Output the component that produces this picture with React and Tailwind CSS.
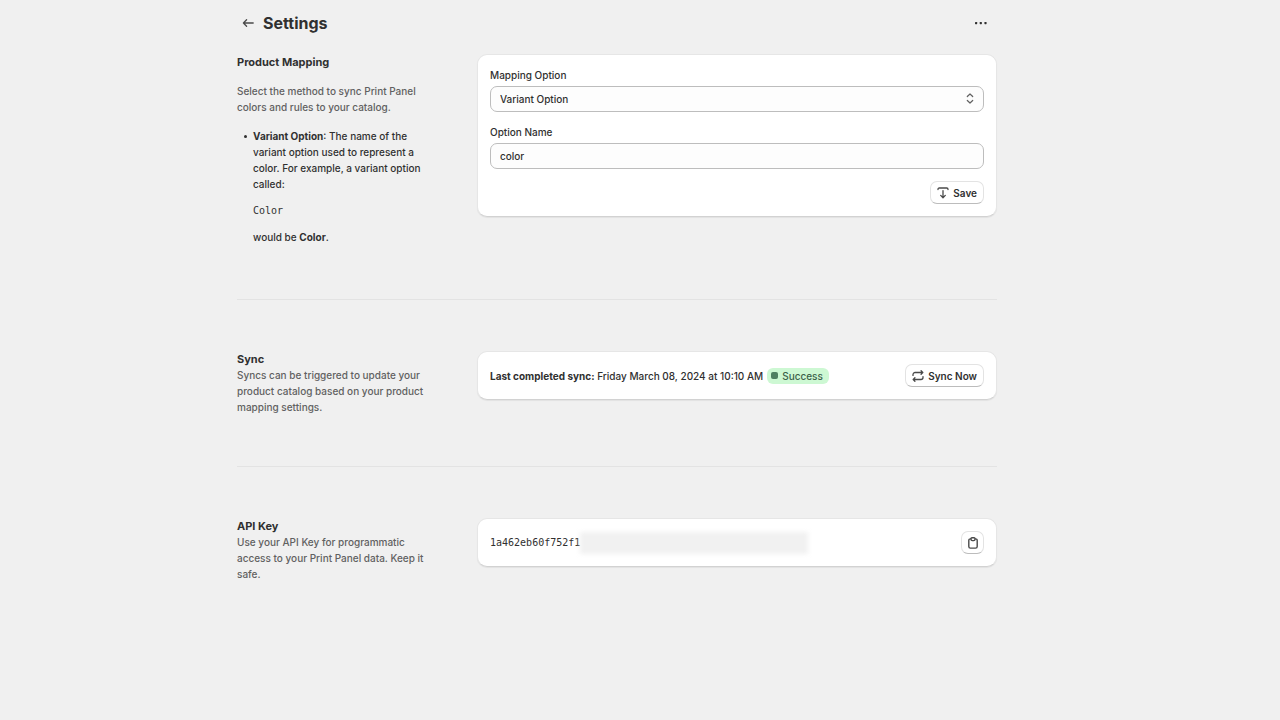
import { useState } from 'react';

const cardClass = 'bg-white rounded-[10px] border border-[#e6e6e6] border-b-[#d2d2d2] shadow-[0_1px_1px_rgba(0,0,0,0.06)]';
const buttonClass = 'flex items-center justify-center h-[23px] bg-white rounded-[7px] border border-[#e3e3e3] border-b-[#bcbcbc] text-[10px] text-[#303030] font-semibold hover:bg-gray-50';
const fieldClass = 'block w-full h-[26px] px-[9px] appearance-none bg-[#fdfdfd] border border-[#bdbdbd] rounded-[7px]';

function ArrowLeftIcon() {
  return (
    <svg width="12" height="10" viewBox="0 0 12 10" fill="none" stroke="#4a4a4a" strokeWidth="1.3" strokeLinecap="round" strokeLinejoin="round">
      <path d="M11.2 5H1.4M4.6 1.8 1.4 5l3.2 3.2" />
    </svg>
  );
}

function DotsIcon() {
  return (
    <svg width="12" height="4" viewBox="0 0 12 4" fill="#303030">
      <rect x="0" y="1" width="2.2" height="2.2" rx="0.6" />
      <rect x="4.7" y="1" width="2.2" height="2.2" rx="0.6" />
      <rect x="9.4" y="1" width="2.2" height="2.2" rx="0.6" />
    </svg>
  );
}

function SelectIcon() {
  return (
    <svg className="absolute right-2.5 top-[7px] pointer-events-none" width="8" height="11" viewBox="0 0 8 11" fill="none" stroke="#616161" strokeWidth="1.2" strokeLinecap="round" strokeLinejoin="round">
      <path d="M1.3 3.5 4 1l2.7 2.5M1.3 7.5 4 10l2.7-2.5" />
    </svg>
  );
}

function SaveIcon() {
  return (
    <svg width="12" height="12" viewBox="0 0 12 12" fill="none" stroke="#4a4a4a" strokeWidth="1.3" strokeLinecap="round" strokeLinejoin="round">
      <path d="M1 2.6v-.3C1 1.6 1.5 1 2.3 1h7.4c.8 0 1.3.6 1.3 1.3v.3M6 3.6v7M3.7 8.4 6 10.7l2.3-2.3" />
    </svg>
  );
}

function SyncIcon() {
  return (
    <svg width="12" height="12" viewBox="0 0 12 12" fill="none" stroke="#4a4a4a" strokeWidth="1.3" strokeLinecap="round" strokeLinejoin="round">
      <path d="M1 5.4V4.6c0-1.2.9-2.1 2.1-2.1h7.6M9.1.8l1.7 1.7-1.7 1.7" />
      <path d="M11 6.6v.8c0 1.2-.9 2.1-2.1 2.1H1.3M2.9 7.8 1.2 9.5l1.7 1.7" />
    </svg>
  );
}

function ClipboardIcon() {
  return (
    <svg width="12" height="12" viewBox="0 0 12 12" fill="none" stroke="#4a4a4a" strokeWidth="1.4" strokeLinejoin="round">
      <path d="M4 1.9h-.6c-.9 0-1.6.7-1.6 1.6v6c0 .9.7 1.6 1.6 1.6h5.2c.9 0 1.6-.7 1.6-1.6v-6c0-.9-.7-1.6-1.6-1.6H8" />
      <path d="M4.9.8h2.2c.5 0 .9.4.9.9v.6c0 .7-.6 1.3-1.3 1.3H5.3C4.6 3.6 4 3 4 2.3v-.6c0-.5.4-.9.9-.9Z" />
    </svg>
  );
}

function Section({ description, children }) {
  return (
    <section className="grid grid-cols-[6fr_13fr] items-start">
      <div className="pr-12">{description}</div>
      {children}
    </section>
  );
}

export default function App() {
  const [method, setMethod] = useState('variant');
  const [optionName, setOptionName] = useState('color');

  return (
    <div className="min-h-screen bg-[#f0f0f0] text-[#303030] text-[10px] leading-4 font-medium font-['Inter',sans-serif] pl-4 pr-[62px]">
      <main className="max-w-[760px] mx-auto">
        <header className="flex items-center justify-between h-[54px] pb-2 pl-[5px] pr-2.5">
          <div className="flex items-center gap-[9px]">
            <a href="#back" aria-label="Back"><ArrowLeftIcon /></a>
            <h1 className="text-base font-bold">Settings</h1>
          </div>
          <button type="button" aria-label="More actions"><DotsIcon /></button>
        </header>

        <Section
          description={
            <>
              <h2 className="text-[11px] leading-4 font-bold">Product Mapping</h2>
              <p className="mt-[13px] text-[#616161]">Select the method to sync Print Panel colors and rules to your catalog.</p>
              <ul className="mt-[13px] pl-[7px]">
                <li className="flex gap-1.5">
                  <span className="shrink-0 w-[3px] h-[3px] mt-[7px] rounded-full bg-[#303030]"></span>
                  <div>
                    <p><b>Variant Option</b>: The name of the variant option used to represent a color. For example, a variant option called:</p>
                    <pre className="mt-[11px] mb-2.5 font-normal font-['DejaVu_Sans_Mono',monospace]">Color</pre>
                    <p>would be <b>Color</b>.</p>
                  </div>
                </li>
              </ul>
            </>
          }
        >
          <form className={`${cardClass} p-3`} onSubmit={(e) => e.preventDefault()}>
            <label htmlFor="method" className="block mb-[3px]">Mapping Option</label>
            <div className="relative">
              <select id="method" value={method} onChange={(e) => setMethod(e.target.value)} className={fieldClass}>
                <option value="variant">Variant Option</option>
                <option value="tag">Product Tag</option>
              </select>
              <SelectIcon />
            </div>
            <label htmlFor="optionName" className="block mt-3 mb-[3px]">Option Name</label>
            <input id="optionName" type="text" value={optionName} onChange={(e) => setOptionName(e.target.value)} className={fieldClass} />
            <div className="flex justify-end mt-3">
              <button type="submit" className={`${buttonClass} gap-1 px-1.5`}>
                <SaveIcon />
                Save
              </button>
            </div>
          </form>
        </Section>

        <hr className="mt-[54px] mb-[51px] border-[#e3e3e3]" />

        <Section
          description={
            <>
              <h2 className="text-[11px] leading-4 font-bold">Sync</h2>
              <p className="text-[#616161]">Syncs can be triggered to update your product catalog based on your product mapping settings.</p>
            </>
          }
        >
          <div className={`${cardClass} p-3 flex items-center justify-between`}>
            <div className="flex items-center gap-1">
              <p><b>Last completed sync:</b> Friday March 08, 2024 at 10:10 AM</p>
              <span className="flex items-center gap-1 h-4 px-1 pr-1.5 rounded-md bg-[#cdf8d3] text-[#3c6149]">
                <span className="w-[7px] h-[7px] rounded-[2px] bg-[#4f8062]"></span>
                Success
              </span>
            </div>
            <button type="button" className={`${buttonClass} gap-1 px-1.5`}>
              <SyncIcon />
              Sync Now
            </button>
          </div>
        </Section>

        <hr className="my-[51px] border-[#e3e3e3]" />

        <Section
          description={
            <>
              <h2 className="text-[11px] leading-4 font-bold">API Key</h2>
              <p className="text-[#616161]">Use your API Key for programmatic access to your Print Panel data. Keep it safe.</p>
            </>
          }
        >
          <div className={`${cardClass} p-3 flex items-center justify-between`}>
            <div className="flex items-center">
              <code className="font-normal font-['DejaVu_Sans_Mono',monospace]">1a462eb60f752f1</code>
              {/* hidden part of the key */}
              <span className="w-[228px] h-[22px] bg-[#f1f1f1] blur-[2px]"></span>
            </div>
            <button type="button" aria-label="Copy API key" className={`${buttonClass} w-[23px]`}>
              <ClipboardIcon />
            </button>
          </div>
        </Section>
      </main>
    </div>
  );
}
